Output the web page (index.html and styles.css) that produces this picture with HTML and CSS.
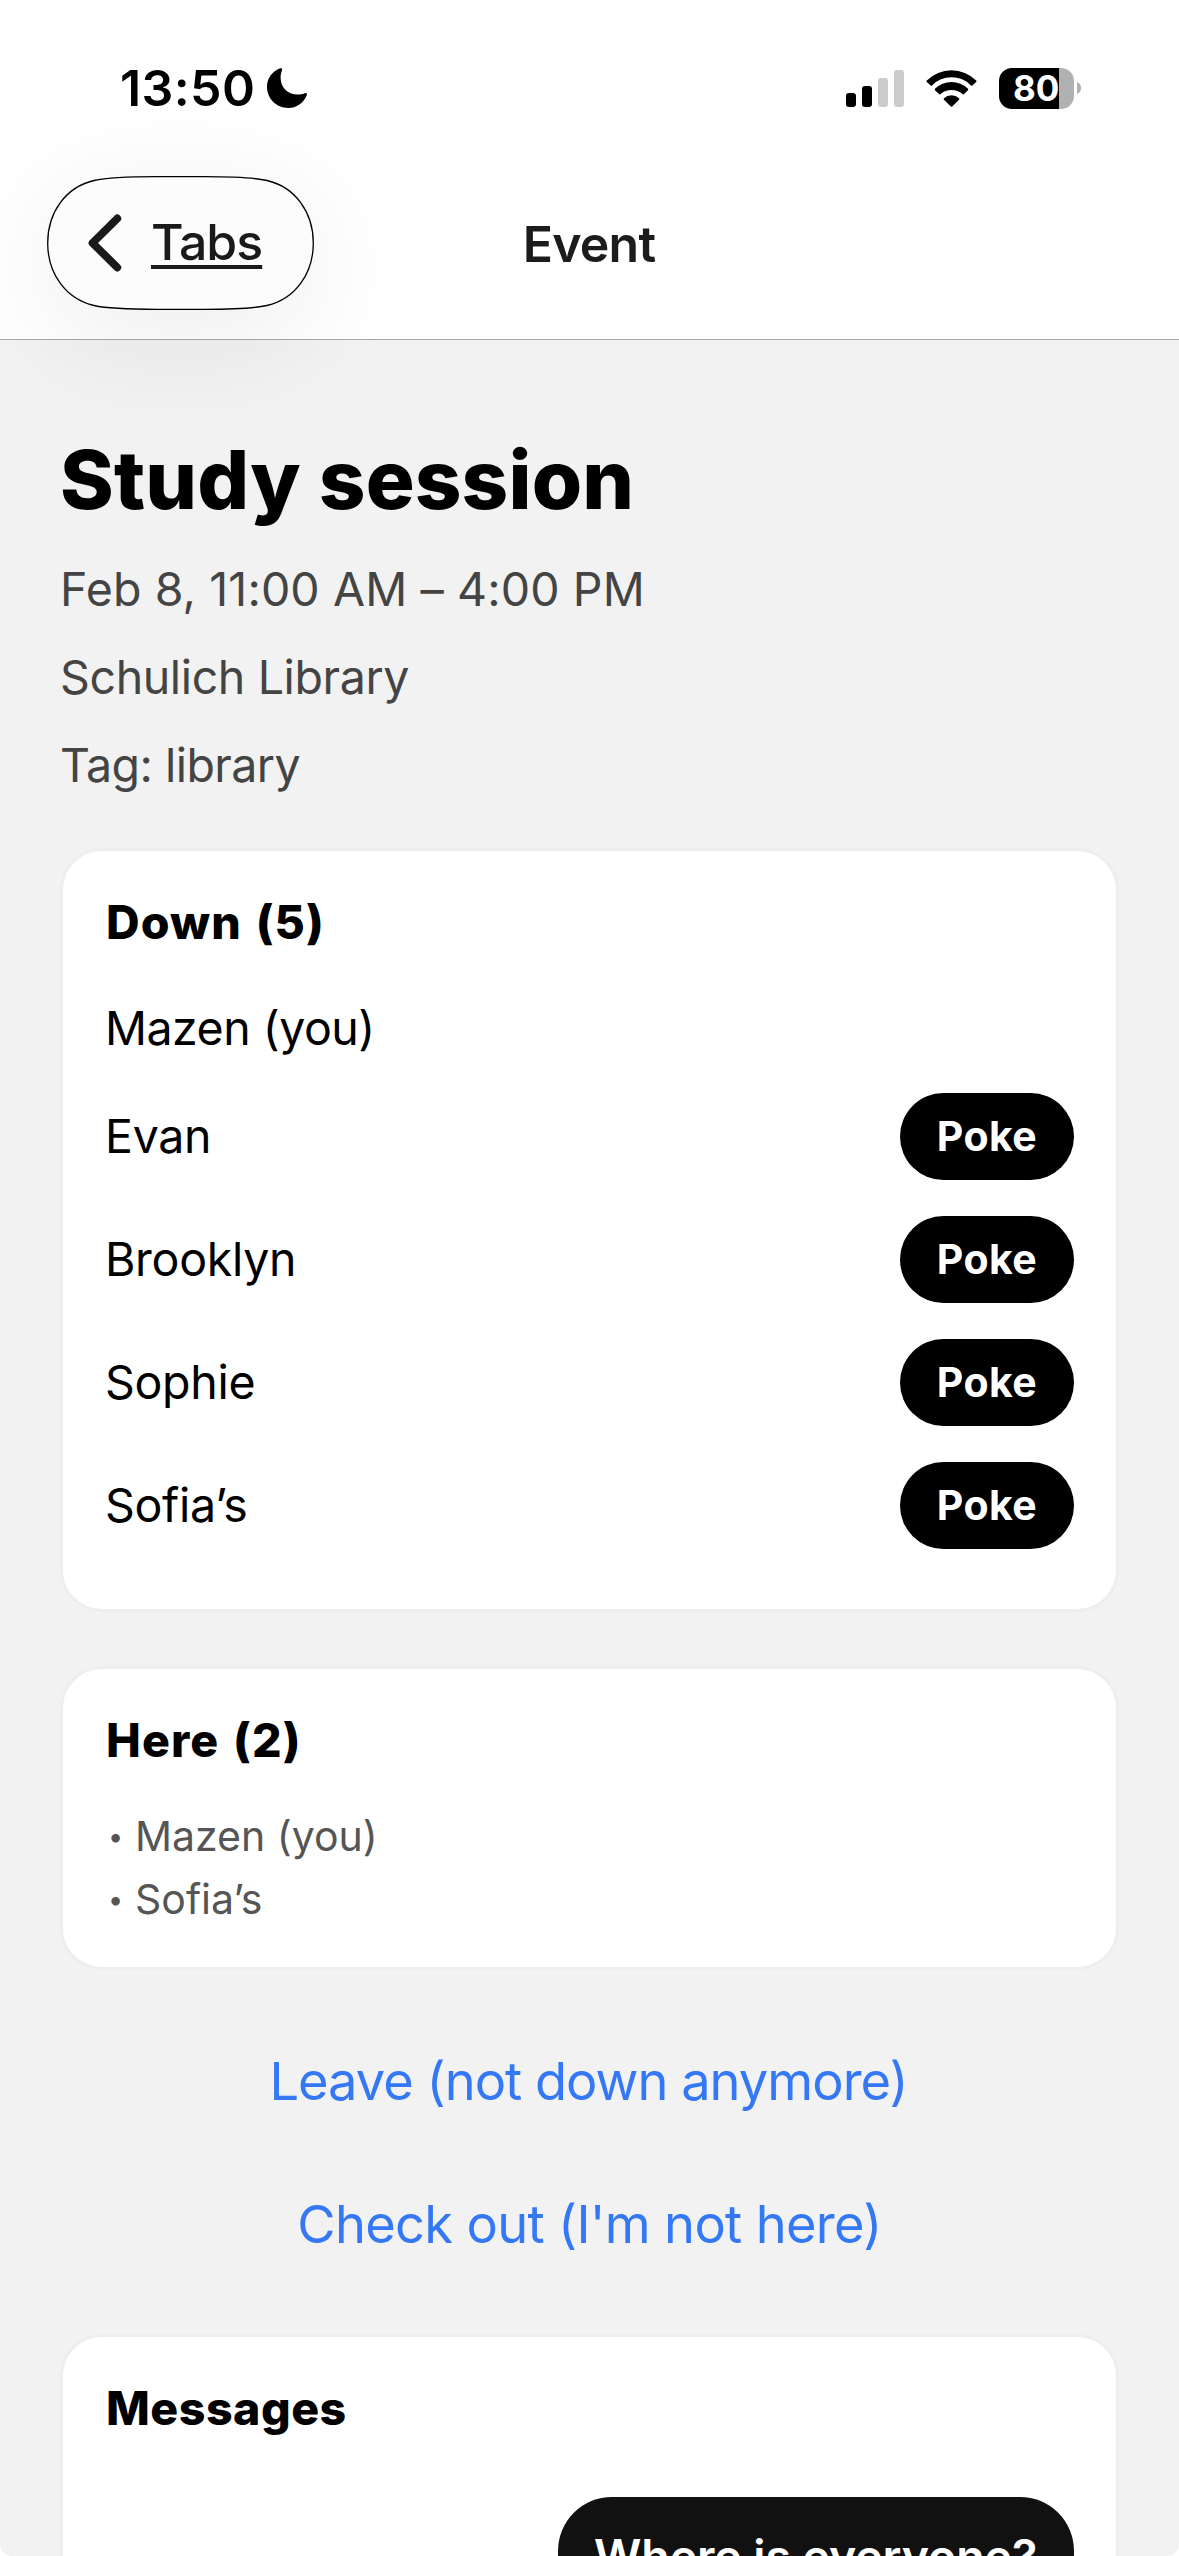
FILE: index.html
```html
<!DOCTYPE html>
<html lang="en">
<head>
<meta charset="utf-8">
<title>Event</title>
<link rel="stylesheet" href="styles.css">
</head>
<body>
<div class="screen">
  <header class="header">
    <div class="status">
      <span class="time">13:50</span>
      <svg class="moon" width="40" height="40" viewBox="0 0 40 40" aria-hidden="true"><path d="M13.2.3C14.6-.2 15.6.9 15 2.2 14 4.8 13.6 7 13.6 9.5 13.6 19.5 20.5 26.6 30.5 26.6 33 26.6 35.5 26.2 37.7 25.2 39.3 24.6 40.4 25.7 39.8 27.2 36.6 35 29.5 40 21.2 40 9.4 40 0 30.6 0 18.8 0 10.5 5.2 3.3 13.2.3Z"/></svg>
      <div class="indicators">
        <svg width="58" height="37" viewBox="0 0 58 37" aria-hidden="true">
          <rect x="0" y="23" width="10" height="14" rx="3"/>
          <rect x="16" y="16" width="10" height="21" rx="3"/>
          <rect class="faint" x="32" y="8" width="10" height="29" rx="3"/>
          <rect class="faint" x="48" y="0" width="10" height="37" rx="3"/>
        </svg>
        <svg width="51" height="37" viewBox="0 0 51 37" aria-hidden="true">
          <path d="M.8 10.6A34.8 34.8 0 0 1 50.2 10.6Q50.9 11.3 50.2 12L46.3 15.6Q45.6 16.1 45 15.5A27 27 0 0 0 6 15.5Q5.4 16.1 4.7 15.6L.8 12Q.1 11.3.8 10.6Z"/>
          <path d="M9 18.8A23.6 23.6 0 0 1 42 18.8Q42.6 19.5 42 20.2L37.8 24.2Q37.2 24.7 36.6 24.1A17.2 17.2 0 0 0 14.4 24.1Q13.8 24.7 13.2 24.2L9 20.2Q8.4 19.5 9 18.8Z"/>
          <path d="M18 28.3A11 11 0 0 1 33 28.3Q33.7 29 33 29.7L26.2 36.4Q25.5 37 24.8 36.4L18 29.7Q17.3 29 18 28.3Z"/>
        </svg>
        <div class="battery">
          <span class="battery-body">80</span>
          <svg width="4" height="12" viewBox="0 0 4 12" aria-hidden="true"><path class="nub" d="M0 0C2.6 1 4 3.2 4 6S2.6 11 0 12Z"/></svg>
        </div>
      </div>
    </div>
    <nav class="nav">
      <a class="back">
        <svg class="back-outline" width="267" height="134" viewBox="0 0 267 134" aria-hidden="true"><path d="M.7 67C.7 36 19 11 47 4.5 62 1 84 .7 110 .7H157C183 .7 205 1 220 4.5 248 11 266.3 36 266.3 67S248 123 220 129.5C205 133 183 133.3 157 133.3H110C84 133.3 62 133 47 129.5 19 123 .7 98 .7 67Z"/></svg>
        <svg class="chevron" width="34" height="58" viewBox="0 0 34 58" aria-hidden="true"><path d="M29.3 4.5 4.5 29 29.3 53.5"/></svg>
        <span class="back-label">Tabs</span>
      </a>
      <h1 class="nav-title">Event</h1>
    </nav>
  </header>

  <main class="content">
    <h2 class="title">Study session</h2>
    <p class="meta meta-date">Feb 8, 11:00 AM – 4:00 PM</p>
    <p class="meta meta-place">Schulich Library</p>
    <p class="meta">Tag: library</p>

    <section class="card card-down">
      <h3 class="card-title card-title-count">Down (5)</h3>
      <ul class="people">
        <li class="person person-self">Mazen (you)</li>
        <li class="person">Evan<button class="poke">Poke</button></li>
        <li class="person">Brooklyn<button class="poke">Poke</button></li>
        <li class="person">Sophie<button class="poke">Poke</button></li>
        <li class="person">Sofia’s<button class="poke">Poke</button></li>
      </ul>
    </section>

    <section class="card card-here">
      <h3 class="card-title card-title-count">Here (2)</h3>
      <ul class="here">
        <li class="here-item"><span class="bullet">•</span>Mazen (you)</li>
        <li class="here-item"><span class="bullet">•</span>Sofia’s</li>
      </ul>
    </section>

    <div class="actions">
      <a class="action action-leave">Leave (not down anymore)</a>
      <a class="action">Check out (I'm not here)</a>
    </div>

    <section class="card card-messages">
      <h3 class="card-title">Messages</h3>
      <p class="bubble">Where is everyone?</p>
    </section>
  </main>
</div>
</body>
</html>
```
FILE: styles.css
```css
* {
  box-sizing: border-box;
  margin: 0;
  padding: 0;
}

body {
  background: #fff;
  font-family: Inter, "Liberation Sans", sans-serif;
  color: #000;
}

.screen {
  width: 1179px;
  height: 2556px;
  overflow: hidden;
  background: #f2f2f2;
  border-radius: 0 0 12px 12px;
}

/* Header */
.header {
  height: 340px;
  padding-top: 58px;
  background: #fff;
  border-bottom: 1px solid #a8a8a8;
}

.status {
  display: flex;
  align-items: center;
  height: 60px;
  padding: 0 98px 0 120px;
}

.time {
  width: 147px;
  font-size: 50px;
  font-weight: 600;
  line-height: 60px;
  letter-spacing: 0.4px;
}

.indicators {
  display: flex;
  align-items: center;
  gap: 22px;
  margin-left: auto;
}

.faint {
  fill: #ccc;
}

.battery {
  display: flex;
  align-items: center;
  gap: 3px;
}

.battery-body {
  width: 75px;
  height: 41px;
  padding-left: 14px;
  border-radius: 13px;
  background: linear-gradient(90deg, #000 60px, #b1b1b1 60px);
  color: #fff;
  font-size: 35px;
  font-weight: 700;
  line-height: 41px;
}

.nub {
  fill: #b1b1b1;
}

.nav {
  display: grid;
  grid-template-columns: 1fr auto 1fr;
  align-items: center;
  height: 134px;
  margin-top: 58px;
  padding: 0 48px 0 47px;
}

.back {
  position: relative;
  display: flex;
  align-items: center;
  width: 267px;
  height: 134px;
  padding-left: 41px;
  border-radius: 67px;
  box-shadow: 0 24px 120px rgba(0, 0, 0, 0.08);
}

.back-outline {
  position: absolute;
  inset: 0;
  fill: #fcfcfc;
  stroke: #000;
  stroke-width: 1.3;
}

.chevron {
  position: relative;
  fill: none;
  stroke: #1a1a1a;
  stroke-width: 7.8;
  stroke-linecap: round;
  stroke-linejoin: round;
}

.back-label {
  position: relative;
  margin-left: 29px;
  padding-bottom: 2px;
  color: #1a1a1a;
  font-size: 50px;
  font-weight: 450;
  line-height: 60px;
  letter-spacing: -1px;
  text-decoration: underline;
  text-decoration-thickness: 4px;
  text-underline-offset: 5px;
  text-decoration-skip-ink: none;
}

.nav-title {
  padding-top: 2px;
  color: #1c1c1e;
  font-size: 50px;
  font-weight: 600;
  line-height: 60px;
  letter-spacing: -0.8px;
}

/* Event details */
.content {
  padding: 90px 60px 0;
}

.title {
  margin-bottom: 15px;
  font-size: 81.5px;
  font-weight: 800;
  line-height: 100px;
  letter-spacing: 0.15px;
}

.meta {
  color: #444;
  font-size: 46.5px;
  line-height: 88px;
  letter-spacing: -0.55px;
}

.meta-date {
  letter-spacing: 0.12px;
}

.meta-place {
  letter-spacing: -0.38px;
}

/* Cards */
.card {
  padding: 42px;
  border: 3px solid #eee;
  border-radius: 42px;
  background: #fff;
}

.card-title {
  padding-left: 1px;
  font-size: 46.5px;
  font-weight: 800;
  line-height: 58px;
  letter-spacing: 0.5px;
}

.card-title-count {
  letter-spacing: 1.1px;
  word-spacing: 2.5px;
}

.card-down {
  margin-top: 39px;
  padding-bottom: 60px;
}

.people {
  display: flex;
  flex-direction: column;
  gap: 36px;
  margin-top: 49px;
  list-style: none;
}

.person {
  display: flex;
  align-items: center;
  justify-content: space-between;
  font-size: 46.5px;
  line-height: 57px;
  letter-spacing: -0.3px;
}

.person-self {
  letter-spacing: -0.5px;
}

.poke {
  width: 174px;
  height: 87px;
  border: 0;
  border-radius: 43.5px;
  background: #000;
  color: #fff;
  font: 700 41px/87px Inter, "Liberation Sans", sans-serif;
  letter-spacing: 0.4px;
}

.card-here {
  margin-top: 54px;
  padding-bottom: 36px;
}

.here {
  margin-top: 36px;
  list-style: none;
}

.here-item {
  display: flex;
  color: #555;
  font-size: 41px;
  line-height: 63px;
}

.bullet {
  width: 30px;
  padding-left: 3px;
  font-size: 27px;
}

/* Actions */
.actions {
  display: flex;
  flex-direction: column;
  align-items: center;
  gap: 79px;
  margin: 79px 0 78px;
}

.action {
  color: #3478f6;
  font-size: 52.4px;
  line-height: 64px;
  letter-spacing: -0.68px;
}

.action-leave {
  padding-right: 2px;
  letter-spacing: -0.98px;
}

/* Messages */
.bubble {
  width: 516px;
  margin: 60px 0 0 auto;
  padding: 30px 36px;
  border-radius: 54px;
  background: #111;
  color: #fff;
  font-size: 46.5px;
  font-weight: 600;
  line-height: 58px;
  letter-spacing: -0.12px;
  white-space: nowrap;
}
```
